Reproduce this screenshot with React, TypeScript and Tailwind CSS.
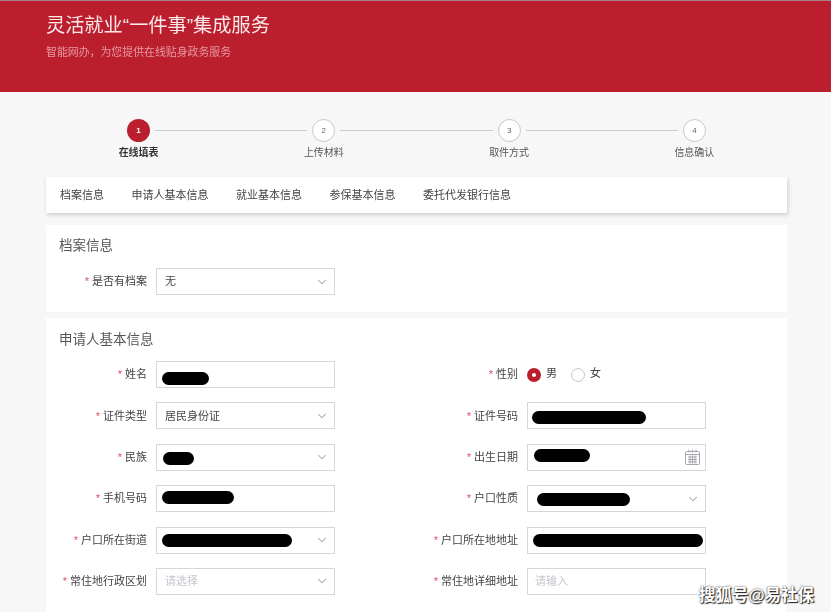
import { ChevronDown } from "lucide-react";

const tabs = ["档案信息", "申请人基本信息", "就业基本信息", "参保基本信息", "委托代发银行信息"];
const steps = ["在线填表", "上传材料", "取件方式", "信息确认"];

function Label({ text }: { text: string }) {
  return (
    <label className="w-[101px] shrink-0 text-right text-[11px] text-[#444]">
      <span className="mr-[3px] text-[#e0505c]">*</span>
      {text}
    </label>
  );
}

function CalendarIcon() {
  return (
    <svg width="15" height="16" viewBox="0 0 15 16" fill="none" stroke="#a4a7ae" strokeWidth="1" className="mr-[5px] shrink-0">
      <rect x="0.5" y="2.5" width="14" height="13" rx="1" />
      <path d="M0.5 5.5h14M4 0.5v3M7.5 0.5v3M11 0.5v3M3 8h9M3 10.5h9M3 13h9M5 6.5v8M7.5 6.5v8M10 6.5v8" />
    </svg>
  );
}

function Field({ label, children, select, icon }: { label: string; children?: React.ReactNode; select?: boolean; icon?: boolean }) {
  return (
    <div className="flex h-[27px] items-center">
      <Label text={label} />
      <div className="ml-[9px] flex h-[27px] w-[179px] items-center border border-[#d4d6de] bg-white text-[11px] text-[#444]">
        <div className="flex min-w-0 flex-1 items-center">{children}</div>
        {select && <ChevronDown size={14} strokeWidth={1.75} className="mr-[5px] shrink-0 text-[#a0a4ac]" />}
        {icon && <CalendarIcon />}
      </div>
    </div>
  );
}

function Blot({ className }: { className: string }) {
  return <span className={`block h-[13px] rounded-full bg-black ${className}`} />;
}

export default function App() {
  return (
    <div className="relative h-[612px] overflow-hidden bg-[#f7f7f7] font-['Liberation_Sans','Noto_Sans_CJK_SC',sans-serif]">
      <header className="h-[92px] border-t border-[#a8808a] bg-[#bb1f2e] pl-[46px] pt-[12px] blur-[0.5px]">
        <h1 className="text-[19.2px] leading-[26px] text-[#fbe9ea]">灵活就业“一件事”集成服务</h1>
        <p className="mt-[5px] text-[10.9px] leading-[16px] text-[#e59aa2]">智能网办，为您提供在线贴身政务服务</p>
      </header>

      <main className="ml-[46px] w-[741px] blur-[0.5px]">
        <div className="flex items-center pl-[81px] pr-[81px] pt-[27px]">
          {steps.map((s, i) => (
            <div key={s} className={i < 3 ? "flex flex-1 items-center" : "flex items-center"}>
              {i === 0 ? (
                <span className="flex h-[23px] w-[23px] shrink-0 items-center justify-center rounded-full bg-[#bb1f2e] text-[8px] font-bold text-white">1</span>
              ) : (
                <span className="flex h-[23px] w-[23px] shrink-0 items-center justify-center rounded-full border border-[#c4c7ce] bg-white text-[8px] text-[#666]">{i + 1}</span>
              )}
              {i < 3 && <span className="mx-[5px] h-px flex-1 bg-[#c9cbd2]" />}
            </div>
          ))}
        </div>
        <div className="mt-[4px] grid grid-cols-4 text-center text-[10px] leading-[14px]">
          {steps.map((s, i) => (
            <span key={s} className={i === 0 ? "font-bold text-[#333]" : "text-[#555]"}>{s}</span>
          ))}
        </div>

        <nav className="mt-[17px] flex h-[36px] items-center gap-[27.5px] bg-white pl-[14px] text-[11px] text-[#444] shadow-[1px_2px_4px_rgba(120,125,140,0.35)]">
          {tabs.map((t) => <span key={t}>{t}</span>)}
        </nav>

        <section className="mt-[12px] h-[87px] bg-white pl-[13px] pt-[11px]">
          <h2 className="text-[13.5px] leading-[19px] text-[#555]">档案信息</h2>
          <div className="-ml-[13px] mt-[13px]">
            <Field label="是否有档案" select>
              <span className="pl-[8px]">无</span>
            </Field>
          </div>
        </section>

        <section className="mt-[6px] h-[300px] bg-white pt-[12px]">
          <h2 className="pl-[13px] text-[13.5px] leading-[19px] text-[#555]">申请人基本信息</h2>
          <div className="mt-[12px] grid grid-cols-[371px_1fr] gap-y-[14.4px]">
            <Field label="姓名">
              <Blot className="ml-[5px] mt-[8px] w-[47px]" />
            </Field>
            <div className="flex h-[27px] items-center">
              <Label text="性别" />
              <div className="ml-[9px] flex items-center text-[11px] text-[#444]">
                <span className="flex h-[14px] w-[14px] items-center justify-center rounded-full bg-[#bb1f2e]">
                  <span className="h-[4px] w-[4px] rounded-full bg-white" />
                </span>
                <span className="ml-[5px] -mt-[2px]">男</span>
                <span className="ml-[14px] h-[14px] w-[14px] rounded-full border border-[#c4c7ce] bg-white" />
                <span className="ml-[5px] -mt-[2px]">女</span>
              </div>
            </div>

            <Field label="证件类型" select>
              <span className="pl-[8px]">居民身份证</span>
            </Field>
            <Field label="证件号码">
              <Blot className="ml-[4px] mt-[4px] w-[114px]" />
            </Field>

            <Field label="民族" select>
              <Blot className="ml-[6px] mt-[3px] h-[12px] w-[31px]" />
            </Field>
            <Field label="出生日期" icon>
              <Blot className="ml-[6px] -mt-[4px] w-[56px]" />
            </Field>

            <Field label="手机号码">
              <Blot className="ml-[5px] -mt-[3px] w-[72px]" />
            </Field>
            <Field label="户口性质" select>
              <Blot className="ml-[9px] mt-[2px] w-[93px]" />
            </Field>

            <Field label="户口所在街道" select>
              <Blot className="ml-[5px] w-[130px]" />
            </Field>
            <Field label="户口所在地地址">
              <Blot className="ml-[5px] mt-px w-[170px]" />
            </Field>

            <Field label="常住地行政区划" select>
              <span className="pl-[8px] text-[#c3c6cc]">请选择</span>
            </Field>
            <Field label="常住地详细地址">
              <span className="pl-[7px] text-[#c3c6cc]">请输入</span>
            </Field>
          </div>
        </section>
      </main>

      <span className="absolute left-[699px] top-[584px] text-[16.5px] font-bold leading-[22px] text-white [text-shadow:0_0_2px_#222,1px_1px_1px_#222]">搜狐号@易社保</span>
    </div>
  );
}
